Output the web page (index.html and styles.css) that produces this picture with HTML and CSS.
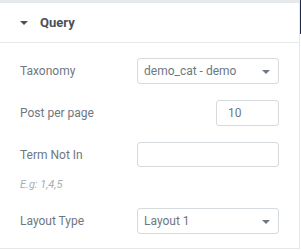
FILE: index.html
```html
<!DOCTYPE html>
<html>
  <head>
    <title>Query</title>
    <link rel="stylesheet" href="styles.css">
  </head>
  <body>
    <div class="topbar"></div>
    <div class="panel">
      <div class="section-head">
        <span class="caret"></span>
        <span class="section-title">Query</span>
      </div>
      <div class="section-body">
        <div class="control">
          <label>Taxonomy</label>
          <div class="select">demo_cat - demo<span class="arrow"></span></div>
        </div>
        <div class="control">
          <label>Post per page</label>
          <div class="number">10</div>
        </div>
        <div class="control tight">
          <label>Term Not In</label>
          <div class="text-input"></div>
        </div>
        <div class="hint">E.g: 1,4,5</div>
        <div class="control">
          <label>Layout Type</label>
          <div class="select">Layout 1<span class="arrow"></span></div>
        </div>
      </div>
    </div>
    <div class="scroll"></div>
  </body>
</html>
```
FILE: styles.css
```css
body{
    margin:0;
    background:#fff;
    font-family: Roboto, "Liberation Sans", sans-serif;
    position:relative;
    height:250px;
    overflow:hidden;
}

.topbar{
    height:3px;
    background:#e6e9ec;
}

.panel{
    width:299px;
    border-right:1px solid #e6e9ec;
    border-bottom:1px solid #e6e9ec;
    height:245px;
}

.section-head{
    height:39px;
    display:flex;
    align-items:center;
    padding-left:20px;
    border-bottom:1px solid #e6e9ec;
}
.caret{
    width:0;
    height:0;
    border-left:4px solid transparent;
    border-right:4px solid transparent;
    border-top:4px solid #495157;
    margin-right:12px;
    margin-top:1px;
}
.section-title{
    font-size:13px;
    font-weight:bold;
    color:#495157;
}

.section-body{
    padding:15px 20px 0 20px;
}

.control{
    display:flex;
    align-items:center;
    justify-content:space-between;
    height:26px;
    margin-bottom:16px;
}
.control.tight{
    height:25px;
    margin-bottom:11px;
}
.control label{
    font-size:12px;
    color:#6d7882;
}

.select, .text-input, .number{
    box-sizing:border-box;
    height:26px;
    border:1px solid #d5dadf;
    border-radius:3px;
    font-size:12px;
    color:#6d7882;
    display:flex;
    align-items:center;
}
.select, .text-input{
    width:142px;
    padding-left:6px;
}
.text-input{
    height:25px;
}
.select{
    position:relative;
}
.arrow{
    position:absolute;
    right:8px;
    top:11px;
    border-left:4px solid transparent;
    border-right:4px solid transparent;
    border-top:4px solid #6d7882;
}
.number{
    width:63px;
    padding-left:11px;
}

.hint{
    font-size:11px;
    line-height:13px;
    font-style:italic;
    color:#a4afb7;
    margin-bottom:17px;
}

.scroll{
    position:absolute;
    right:0;
    top:0;
    width:1px;
    height:34px;
    background:#1f2a4d;
}
```
